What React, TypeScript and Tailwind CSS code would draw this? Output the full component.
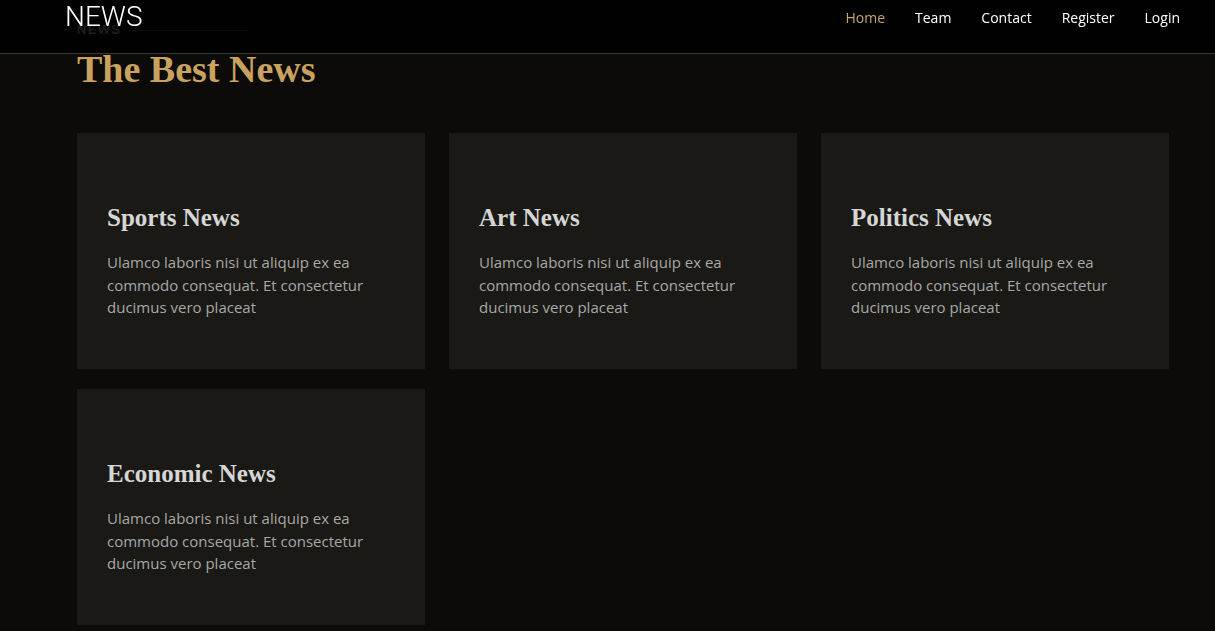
import React from "react";

const navItems = [
  { label: "Home", active: true },
  { label: "Team" },
  { label: "Contact" },
  { label: "Register" },
  { label: "Login" },
];

const cards = ["Sports News", "Art News", "Politics News", "Economic News"];

const blurb =
  "Ulamco laboris nisi ut aliquip ex ea commodo consequat. Et consectetur ducimus vero placeat";

const serif = "font-['Liberation_Serif',serif]";
const sans = "font-['Open_Sans',sans-serif]";

export default function App() {
  return (
    <div className="min-h-[631px] bg-[#0c0b0a]">
      {/* Header */}
      <header className="fixed top-0 left-0 right-0 z-50 flex h-[54px] items-start justify-between border-b border-[#3a3935] bg-[rgba(0,0,0,0.86)] pl-[65px] pr-[35px]">
        <a
          href="#"
          className="mt-[3px] font-['Roboto',sans-serif] text-[28px] font-light leading-[28px] text-white"
        >
          NEWS
        </a>
        <nav className={`mt-[8px] flex gap-[30px] ${sans} text-[14px] font-medium leading-[20px]`}>
          {navItems.map((item) => (
            <a
              key={item.label}
              href="#"
              className={item.active ? "text-[#c9a56f]" : "text-white"}
            >
              {item.label}
            </a>
          ))}
        </nav>
      </header>

      {/* News section */}
      <main className="pl-[77px] pt-[22px] pb-[5px]">
        <div className="flex h-[16px] items-center gap-[8px]">
          <span className="font-['Liberation_Sans',sans-serif] text-[13px] font-bold leading-[16px] tracking-[0.1em] text-[#c4c4c4]">
            NEWS
          </span>
          <span className="h-px w-[120px] bg-[#555]" />
        </div>
        <h1
          className={`mt-[8px] ${serif} text-[38px] font-bold leading-[46px] text-[#c9a25f]`}
        >
          The Best News
        </h1>

        <div className="mt-[41px] grid w-[1092px] grid-cols-3 gap-x-[24px] gap-y-[20px]">
          {cards.map((title) => (
            <div key={title} className="h-[236px] bg-[#1a1915] px-[30px] pt-[70px]">
              <h3 className={`${serif} text-[25px] font-bold leading-[30px] text-[#d6d6d6]`}>
                {title}
              </h3>
              <p className={`mt-[18px] ${sans} text-[15px] leading-[22.5px] text-[#a8a8a8]`}>
                {blurb}
              </p>
            </div>
          ))}
        </div>
      </main>
    </div>
  );
}
